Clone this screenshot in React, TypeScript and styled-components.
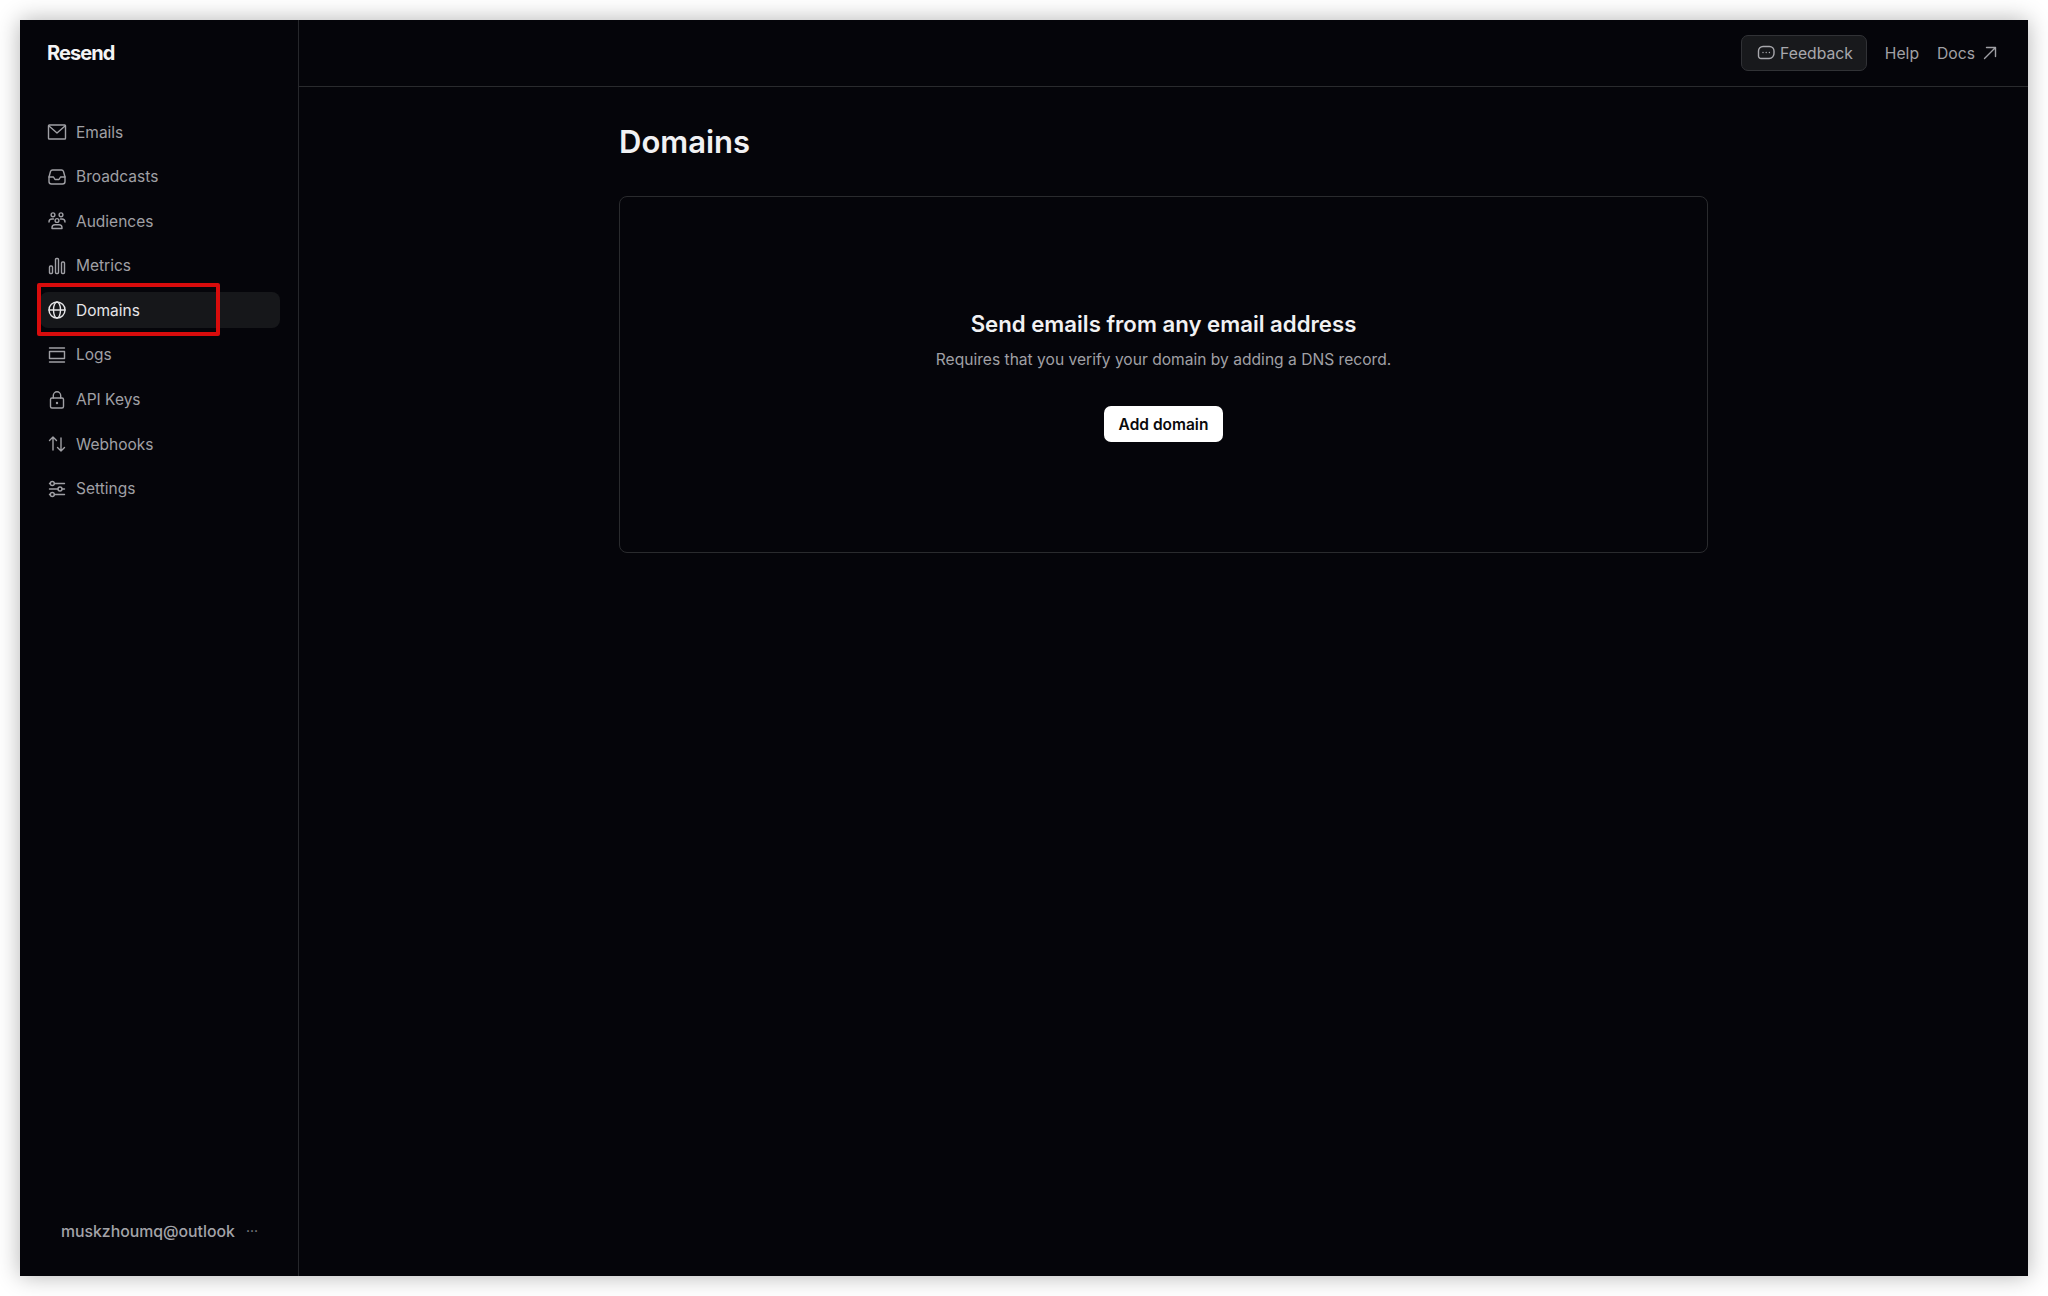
import React from "react";
import styled, { createGlobalStyle } from "styled-components";

const GlobalStyle = createGlobalStyle`
  html, body {
    margin: 0;
    padding: 0;
    background: #ffffff;
    font-family: "Inter", "Liberation Sans", sans-serif;
  }
`;

const Stroke = styled.svg`
  width: 20px;
  height: 20px;
  flex: none;
  fill: none;
  stroke: currentColor;
  stroke-width: 1.4;
  stroke-linecap: round;
  stroke-linejoin: round;
`;

const Icon = ({ children }: { children: React.ReactNode }) => (
  <Stroke viewBox="0 0 20 20">{children}</Stroke>
);

const navItems: { label: string; active?: boolean; icon: React.ReactNode }[] = [
  {
    label: "Emails",
    icon: (
      <>
        <rect x="1.500" y="3" width="17" height="14" rx="0.8" />
        <path d="M2 4 10 11l8-7" />
      </>
    ),
  },
  {
    label: "Broadcasts",
    icon: (
      <>
        <path d="M5.500 3h9c1 0 1.700.6 2 1.500L18 10v4.500a2.500 2.500 0 0 1-2.500 2.500h-11A2.500 2.500 0 0 1 2 14.500V10l1.500-5.500C3.800 3.600 4.500 3 5.500 3Z" />
        <path d="M2 10h4.500l1.500 2.500h4l1.500-2.500H18" />
      </>
    ),
  },
  {
    label: "Audiences",
    icon: (
      <>
        <circle cx="6" cy="3.800" r="1.900" />
        <circle cx="14" cy="3.800" r="1.900" />
        <circle cx="10" cy="9.500" r="1.900" />
        <path d="M2 11c0-2 1.500-3 3-3h1.500" />
        <path d="M18 11c0-2-1.500-3-3-3h-1.500" />
        <path d="M5 17.500v-.8c0-1.800 1.500-3 3-3h4c1.500 0 3 1.200 3 3v.8Z" />
      </>
    ),
  },
  {
    label: "Metrics",
    icon: (
      <>
        <rect x="2.500" y="10" width="3" height="7.500" rx="1" />
        <rect x="8.500" y="2.500" width="3" height="15" rx="1" />
        <rect x="14.500" y="6" width="3" height="11.500" rx="1" />
      </>
    ),
  },
  {
    label: "Domains",
    active: true,
    icon: (
      <>
        <circle cx="10" cy="10" r="8" />
        <path d="M2 10h16" />
        <ellipse cx="10" cy="10" rx="3.500" ry="8" />
      </>
    ),
  },
  {
    label: "Logs",
    icon: (
      <>
        <rect x="2.500" y="6.500" width="15" height="7" />
        <path d="M2.500 3h15M2.500 17h15" />
      </>
    ),
  },
  {
    label: "API Keys",
    icon: (
      <>
        <rect x="3.500" y="8" width="13" height="10" rx="1.500" />
        <path d="M6.300 8V5.500a3.700 3.700 0 0 1 7.400 0V8" />
        <circle cx="10" cy="13" r="0.500" />
      </>
    ),
  },
  {
    label: "Webhooks",
    icon: (
      <>
        <path d="M6 16V3M2.500 6.500 6 3l3.500 3.500" />
        <path d="M14 4v13M10.500 13.500 14 17l3.500-3.500" />
      </>
    ),
  },
  {
    label: "Settings",
    icon: (
      <>
        <path d="M7.500 4.500h10M2.500 4.500h1" />
        <circle cx="5.300" cy="4.500" r="2" />
        <path d="M2.500 10h8.500M15 10h2.500" />
        <circle cx="13" cy="10" r="2" />
        <path d="M7.500 15.500h10M2.500 15.500h1" />
        <circle cx="5.300" cy="15.500" r="2" />
      </>
    ),
  },
];

export default function App() {
  return (
    <>
      <GlobalStyle />
      <Page>
        <Window>
          <Sidebar>
            <Logo>Resend</Logo>
            <Nav>
              {navItems.map((item) => (
                <NavItem key={item.label} $active={item.active}>
                  <Icon>{item.icon}</Icon>
                  {item.label}
                  {item.active && <Highlight />}
                </NavItem>
              ))}
            </Nav>
            <Account>
              <AccountName>muskzhoumq@outlook</AccountName>
              <Dots>···</Dots>
            </Account>
          </Sidebar>
          <Main>
            <Header>
              <FeedbackButton>
                <Icon>
                  <path d="M7 3.500h6.500A4.500 4.500 0 0 1 18 8v2a5 5 0 0 1-5 5.500H5a2.500 2.500 0 0 1-2.500-2.500V8A4.500 4.500 0 0 1 7 3.500Z" />
                  <path d="M7 9.500h.01M10.200 9.500h.01M13.400 9.500h.01" />
                </Icon>
                Feedback
              </FeedbackButton>
              <HeaderLink>Help</HeaderLink>
              <HeaderLink>
                Docs
                <Icon>
                  <path d="M4.500 15.500 15.500 4.500M6.500 4.500h9v9" />
                </Icon>
              </HeaderLink>
            </Header>
            <Content>
              <Title>Domains</Title>
              <EmptyCard>
                <CardTitle>Send emails from any email address</CardTitle>
                <CardText>Requires that you verify your domain by adding a DNS record.</CardText>
                <AddButton>Add domain</AddButton>
              </EmptyCard>
            </Content>
          </Main>
        </Window>
      </Page>
    </>
  );
}

const Page = styled.div`
  height: 1296px;
  box-sizing: border-box;
  padding: 20px;
  overflow: hidden;
`;

const Window = styled.div`
  height: 1256px;
  display: flex;
  background: #05050a;
  box-shadow: 0 0 22px rgba(0, 0, 0, 0.3);
`;

const Sidebar = styled.aside`
  width: 279px;
  flex: none;
  box-sizing: border-box;
  border-right: 1px solid #26272b;
  display: flex;
  flex-direction: column;
  padding: 0 18px 0 20px;
`;

const Logo = styled.div`
  height: 66px;
  display: flex;
  align-items: center;
  padding-left: 7px;
  font-size: 20px;
  font-weight: 700;
  letter-spacing: -0.9px;
  color: #f4f4f5;
`;

const Nav = styled.nav`
  margin-top: 28px;
  display: flex;
  flex-direction: column;
  gap: 8.600px;
`;

const NavItem = styled.div<{ $active?: boolean }>`
  position: relative;
  height: 36px;
  display: flex;
  align-items: center;
  gap: 9px;
  padding-left: 7px;
  border-radius: 8px;
  font-size: 15.500px;
  color: ${(p) => (p.$active ? "#e6e6e8" : "#a0a0a5")};
  background: ${(p) => (p.$active ? "#16171a" : "transparent")};
`;

const Highlight = styled.div`
  position: absolute;
  left: -3px;
  top: -9.500px;
  width: 183px;
  height: 53px;
  box-sizing: border-box;
  border: 4px solid #d80c0c;
  border-radius: 2px;
`;

const Account = styled.div`
  margin-top: auto;
  height: 58px;
  padding: 0 0 0 21px;
  display: flex;
  align-items: flex-start;
  gap: 11px;
`;

const AccountName = styled.div`
  font-size: 15.800px;
  font-weight: 500;
  color: #a3a3a8;
  line-height: 20px;
  margin-top: 4px;
`;

const Dots = styled.div`
  font-size: 14px;
  color: #85858a;
  line-height: 20px;
  margin-top: 3px;
`;

const Main = styled.main`
  flex: 1;
  min-width: 0;
  display: flex;
  flex-direction: column;
`;

const Header = styled.header`
  height: 67px;
  box-sizing: border-box;
  flex: none;
  border-bottom: 1px solid #2a2b2e;
  display: flex;
  align-items: center;
  justify-content: flex-end;
  gap: 18px;
  padding-right: 28px;
`;

const FeedbackButton = styled.button`
  height: 36px;
  box-sizing: border-box;
  display: flex;
  align-items: center;
  gap: 4px;
  padding: 0 13px 0 14px;
  border: 1px solid #313236;
  border-radius: 7px;
  background: #18191c;
  color: #a8a8ad;
  font: 400 15.700px "Inter", sans-serif;
`;

const HeaderLink = styled.a`
  display: flex;
  align-items: center;
  gap: 5px;
  color: #a0a0a5;
  font-size: 15.700px;
`;

const Content = styled.div`
  width: 1089px;
  margin: 0 0 0 320px;
  display: flex;
  flex-direction: column;
`;

const Title = styled.h1`
  margin: 34.500px 0 0;
  height: 40px;
  line-height: 40px;
  font-size: 31px;
  font-weight: 600;
  color: #f1f1f3;
`;

const EmptyCard = styled.section`
  margin-top: 34.500px;
  height: 357px;
  box-sizing: border-box;
  border: 1px solid #2a2b2e;
  border-radius: 8px;
  display: flex;
  flex-direction: column;
  align-items: center;
  padding-top: 112.500px;
`;

const CardTitle = styled.h2`
  margin: 0;
  font-size: 22.200px;
  line-height: 28px;
  font-weight: 600;
  color: #f1f1f3;
`;

const CardText = styled.p`
  margin: 10.500px 0 0;
  font-size: 15.600px;
  line-height: 24px;
  color: #a0a0a5;
`;

const AddButton = styled.button`
  margin-top: 34px;
  height: 36px;
  padding: 0 15px;
  border: none;
  border-radius: 7px;
  background: #ffffff;
  color: #0a0a0c;
  font: 600 15.500px "Inter", sans-serif;
`;
